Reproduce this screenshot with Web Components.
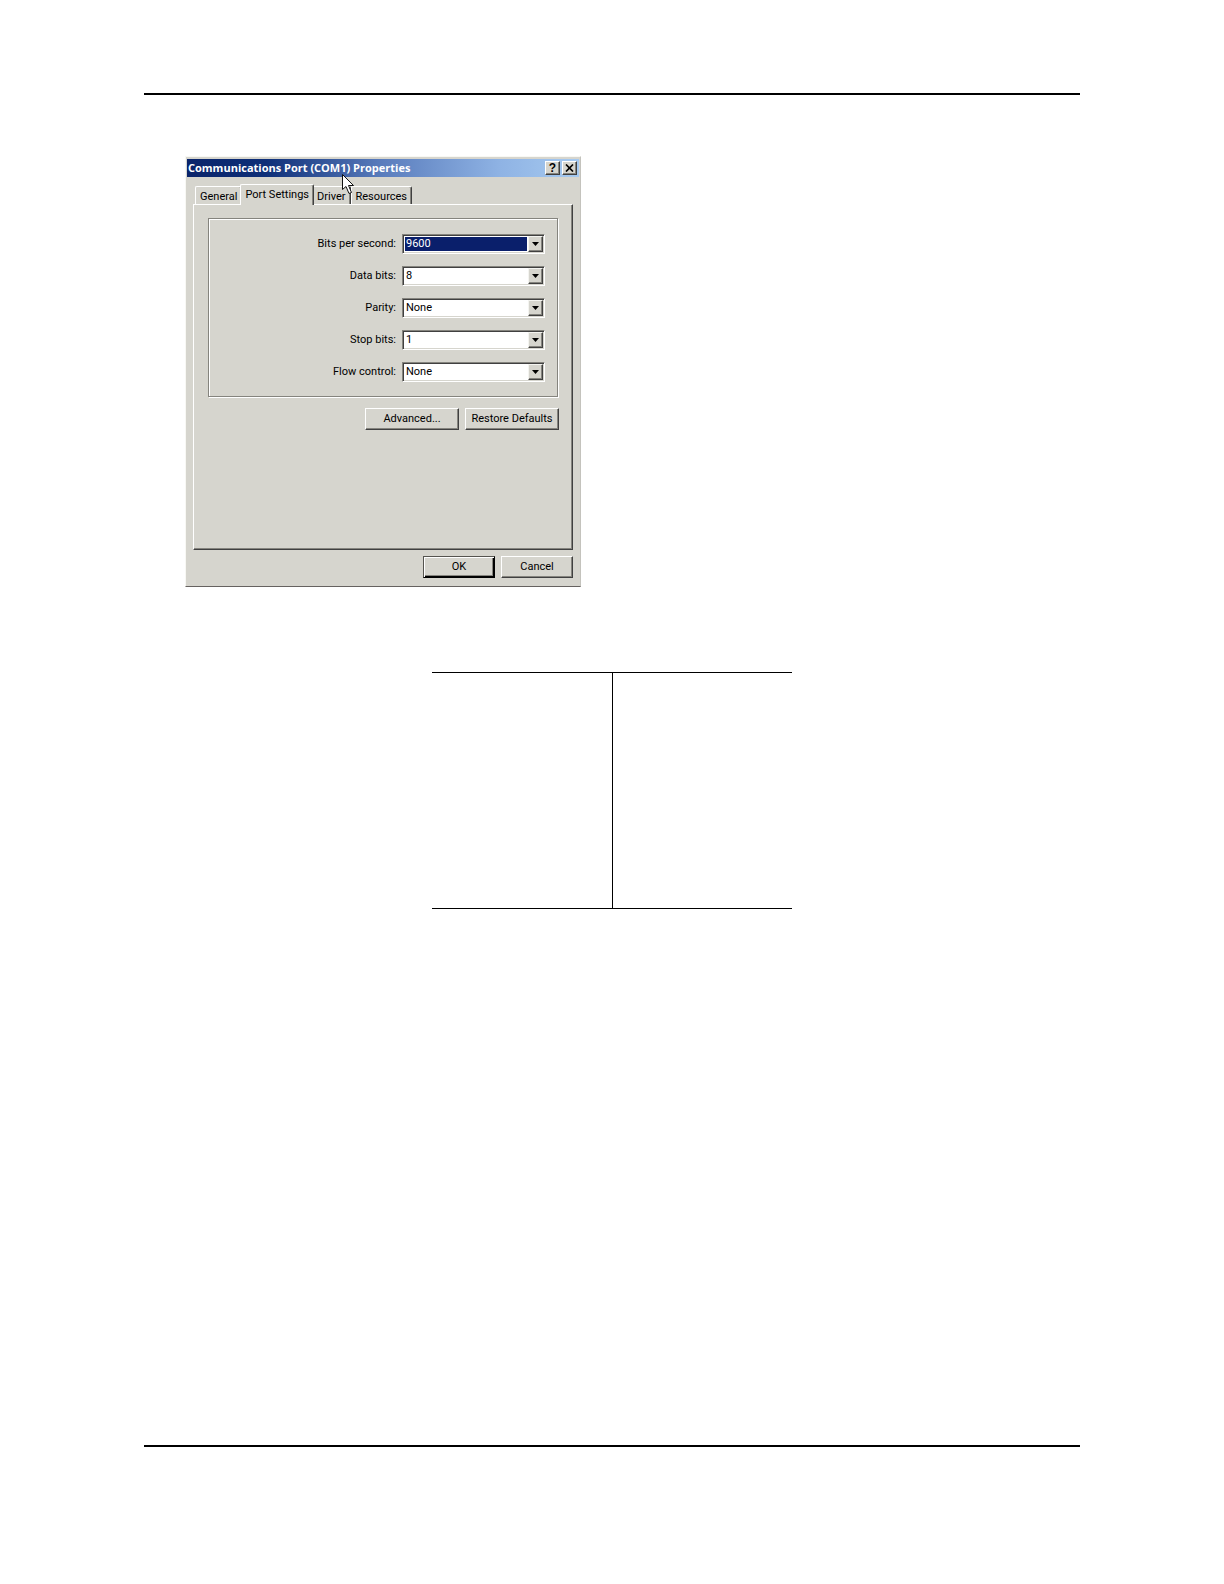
<!DOCTYPE html>
<html lang="en">
  <head>
    <meta charset="UTF-8" />
    <title>Communications Port (COM1) Properties</title>
    <meta name="viewport" content="width=device-width, initial-scale=1.0" />
    <style>
      body {
        margin: 0;
        background: #fff;
        color: #000;
        font: 11px/16px Roboto, "Liberation Sans", sans-serif;
      }
    </style>
  </head>

  <body>
    <manual-page>
      <properties-dialog heading="Communications Port (COM1) Properties">
        <tab-button slot="tabs">General</tab-button>
        <tab-button slot="tabs" selected>Port Settings</tab-button>
        <tab-button slot="tabs">Driver</tab-button>
        <tab-button slot="tabs">Resources</tab-button>

        <settings-group>
          <combo-field label="Bits per second:" options="9600,19200,38400" active></combo-field>
          <combo-field label="Data bits:" options="8,7,6,5"></combo-field>
          <combo-field label="Parity:" options="None,Even,Odd"></combo-field>
          <combo-field label="Stop bits:" options="1,1.5,2"></combo-field>
          <combo-field label="Flow control:" options="None,Hardware,Xon / Xoff"></combo-field>
        </settings-group>

        <push-button slot="actions" style="--width: 94px">Advanced...</push-button>
        <push-button slot="actions" style="--width: 94px">Restore Defaults</push-button>

        <push-button slot="footer" default>OK</push-button>
        <push-button slot="footer">Cancel</push-button>
      </properties-dialog>

      <ruled-table rows="5"></ruled-table>
    </manual-page>

    <script>
      class ManualPage extends HTMLElement {
        constructor() {
          super();
          this.attachShadow({ mode: 'open' }).innerHTML = `
            <style>
              :host {
                display: flex;
                flex-direction: column;
                box-sizing: border-box;
                min-height: 100vh;
                padding: 93px 144px 137px;
              }
              hr {
                width: 100%;
                height: 2px;
                margin: 0;
                border: 0;
                background: #000;
              }
              main {
                flex: 1;
                display: flex;
                flex-direction: column;
                gap: 85px;
                padding: 61px 0 0 0;
              }
            </style>
            <hr />
            <main><slot></slot></main>
            <hr />
          `;
        }
      }

      class PropertiesDialog extends HTMLElement {
        constructor() {
          super();
          this.attachShadow({ mode: 'open' }).innerHTML = `
            <style>
              :host {
                display: block;
                position: relative;
                box-sizing: border-box;
                width: 396px;
                margin-left: 41px;
                padding: 2px 1px 8px;
                background: #d6d5ce;
                border: 1px solid #f8f8f4;
                border-right-color: #c4c3bd;
                border-bottom-color: #666260;
              }
              header {
                display: flex;
                align-items: center;
                gap: 2px;
                height: 18px;
                padding: 0 2px 0 1px;
                background: linear-gradient(to right, #0a246a, #0e2f78 20%, #5a7dbd 50%, #8fb3e4 80%, #a6caf0);
              }
              h1 {
                flex: 1;
                margin: 0;
                color: #fff;
                font: bold 11px/16px "Open Sans", "Noto Sans", sans-serif;
                white-space: nowrap;
              }
              header button {
                display: grid;
                place-items: center;
                width: 15px;
                height: 14px;
                padding: 0;
                background: #d6d5ce;
                border: 1px solid;
                border-color: #fff #404040 #404040 #fff;
                box-shadow: inset -1px -1px #85847e;
                color: #000;
                font: bold 12px/12px "Liberation Sans", sans-serif;
              }
              nav {
                display: flex;
                align-items: flex-end;
                height: 21px;
                padding: 6px 8px 0;
              }
              .panel {
                box-sizing: border-box;
                height: 346px;
                margin: 0 6px;
                padding: 13px 13px 0 14px;
                border: 1px solid;
                border-color: #fff #404040 #404040 #fff;
                box-shadow: inset -1px -1px #85847e;
              }
              .actions, footer {
                display: flex;
                justify-content: flex-end;
                gap: 6px;
              }
              .actions {
                padding-top: 11px;
              }
              footer {
                padding: 6px 6px 0;
              }
              .pointer {
                position: absolute;
                left: 156px;
                top: 17px;
                z-index: 2;
              }
            </style>
            <header>
              <h1></h1>
              <button type="button" aria-label="Help">?</button>
              <button type="button" aria-label="Close">
                <svg width="9" height="8" viewBox="0 0 9 8" aria-hidden="true">
                  <path d="M1 .5 8 7.5M8 .5 1 7.5" stroke="#000" stroke-width="1.7" />
                </svg>
              </button>
            </header>
            <nav role="tablist"><slot name="tabs"></slot></nav>
            <div class="panel">
              <slot></slot>
              <div class="actions"><slot name="actions"></slot></div>
            </div>
            <footer><slot name="footer"></slot></footer>
            <svg class="pointer" width="13" height="21" viewBox="0 0 13 21" aria-hidden="true">
              <path d="M.5.5V15.5L4 12.5L7 19.5L9.500 18.500L6.500 11.500H11.500Z" fill="#fff" stroke="#111" />
            </svg>
          `;
          this.shadowRoot.querySelector('h1').textContent = this.getAttribute('heading');
        }
      }

      class TabButton extends HTMLElement {
        constructor() {
          super();
          this.attachShadow({ mode: 'open' }).innerHTML = `
            <style>
              :host {
                display: block;
              }
              /* the front tab laps over its neighbours and the panel edge */
              :host([selected]) {
                z-index: 1;
                margin: 0 -2px -1px;
              }
              button {
                display: block;
                height: 18px;
                padding: 2px 4px 0;
                background: #d6d5ce;
                border: 1px solid #fff;
                border-right-color: #404040;
                border-bottom: 0;
                border-radius: 2px 2px 0 0;
                box-shadow: inset -1px 0 #85847e;
                color: inherit;
                font: inherit;
              }
              :host([selected]) button {
                height: 21px;
                padding-bottom: 4px;
              }
            </style>
            <button type="button" role="tab"><slot></slot></button>
          `;
          this.shadowRoot.querySelector('button').setAttribute('aria-selected', this.hasAttribute('selected'));
        }
      }

      class SettingsGroup extends HTMLElement {
        constructor() {
          super();
          this.attachShadow({ mode: 'open' }).innerHTML = `
            <style>
              :host {
                display: flex;
                flex-direction: column;
                gap: 12px;
                margin-right: 1px;
                padding: 15px 12px 14px;
                border: 1px solid #85847e;
                box-shadow: inset 1px 1px #fff, 1px 1px #fff;
              }
            </style>
            <slot></slot>
          `;
        }
      }

      class ComboField extends HTMLElement {
        constructor() {
          super();
          const options = this.getAttribute('options').split(',');
          this.attachShadow({ mode: 'open' }).innerHTML = `
            <style>
              :host {
                display: flex;
                align-items: center;
                justify-content: flex-end;
                gap: 6px;
              }
              .box {
                display: grid;
                grid-template-columns: 1fr 15px;
                box-sizing: border-box;
                width: 143px;
                height: 20px;
                border: 1px solid;
                border-color: #85847e #fff #fff #85847e;
                box-shadow: inset 1px 1px #404040, inset -1px -1px #d6d5ce;
                padding: 1px;
                background: #fff;
              }
              select {
                grid-area: 1 / 1 / 2 / 3;
                appearance: none;
                min-width: 0;
                height: 16px;
                padding: 0 1px;
                background: #fff;
                border: 1px solid #fff;
                border-right-width: 16px;
                border-radius: 0;
                outline: 0;
                color: #000;
                font: inherit;
                line-height: 14px;
              }
              :host([active]) select {
                background: #0a1f6b;
                color: #fff;
              }
              .arrow {
                grid-area: 1 / 2;
                display: grid;
                place-items: center;
                background: #d6d5ce;
                border: 1px solid;
                border-color: #f4f4f0 #404040 #404040 #f4f4f0;
                box-shadow: inset -1px -1px #85847e;
                pointer-events: none;
              }
            </style>
            <label for="field">${this.getAttribute('label')}</label>
            <div class="box">
              <select id="field">${options.map(o => `<option>${o}</option>`).join('')}</select>
              <span class="arrow">
                <svg width="7" height="4" viewBox="0 0 7 4" aria-hidden="true"><path d="M0 0H7L3.500 4Z" /></svg>
              </span>
            </div>
          `;
        }
      }

      class PushButton extends HTMLElement {
        constructor() {
          super();
          this.attachShadow({ mode: 'open' }).innerHTML = `
            <style>
              :host {
                display: block;
                width: var(--width, 72px);
              }
              button {
                width: 100%;
                height: 22px;
                padding: 0;
                background: #d6d5ce;
                border: 1px solid;
                border-color: #fff #404040 #404040 #fff;
                box-shadow: inset -1px -1px #85847e;
                color: inherit;
                font: inherit;
              }
              :host([default]) button {
                border-color: #55544f #000 #000 #55544f;
                box-shadow: inset 1px 1px #fff, inset -1px -1px #000, inset -2px -2px #85847e;
              }
            </style>
            <button type="button"><slot></slot></button>
          `;
        }
      }

      class RuledTable extends HTMLElement {
        constructor() {
          super();
          const rows = Number(this.getAttribute('rows'));
          this.attachShadow({ mode: 'open' }).innerHTML = `
            <style>
              :host {
                display: block;
                width: 360px;
                margin: 0 auto;
              }
              table {
                width: 100%;
                border-spacing: 0;
                table-layout: fixed;
                border-top: 1px solid #000;
                border-bottom: 1px solid #000;
              }
              td {
                height: 47px;
                padding: 0;
              }
              td + td {
                border-left: 1px solid #000;
              }
            </style>
            <table><tbody>${'<tr><td></td><td></td></tr>'.repeat(rows)}</tbody></table>
          `;
        }
      }

      window.customElements.define('manual-page', ManualPage);
      window.customElements.define('properties-dialog', PropertiesDialog);
      window.customElements.define('tab-button', TabButton);
      window.customElements.define('settings-group', SettingsGroup);
      window.customElements.define('combo-field', ComboField);
      window.customElements.define('push-button', PushButton);
      window.customElements.define('ruled-table', RuledTable);
    </script>
  </body>
</html>
